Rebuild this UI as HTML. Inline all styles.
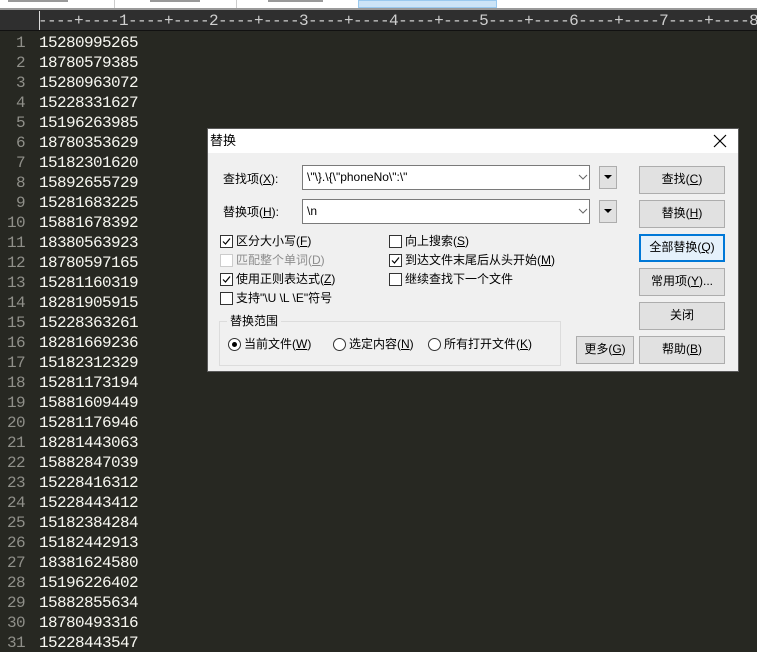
<!DOCTYPE html>
<html><head><meta charset="utf-8"><style>
*{margin:0;padding:0;box-sizing:border-box}
body{width:757px;height:638px;overflow:hidden;background:#272822;position:relative;font-family:"Liberation Sans","Noto Sans CJK SC",sans-serif}
.abs{position:absolute}
.mono{font-family:"Liberation Mono",monospace;font-size:16px;letter-spacing:-0.6px;white-space:pre}
.ln{position:absolute;left:0;width:25px;text-align:right;color:#90908a}
.tx{position:absolute;left:39px;color:#f8f8f2}
.dlg{left:207px;top:128px;width:532px;height:244px;background:#f0f0f0;border:1px solid #5a5a5a}
.t{position:absolute;font-size:12px;color:#000;white-space:nowrap;line-height:14px}
.btn{position:absolute;background:#e1e1e1;border:1px solid #adadad;font-size:12px;text-align:center;line-height:25px;color:#000}
.cb{position:absolute;width:13px;height:13px;border:1px solid #333;background:#fff}
.combo{position:absolute;background:#fff;border:1px solid #7a7a7a;font-size:12px;line-height:23px;padding-left:4px}
.dd{position:absolute;width:18px;height:23px;background:#e1e1e1;border:1px solid #adadad}
.rd{position:absolute;width:13px;height:13px;border:1px solid #333;border-radius:50%;background:#fff}
u{text-decoration:underline}
</style></head><body>
<div class="abs" style="left:0;top:0;width:757px;height:8px;background:#fff"></div>
<div class="abs" style="left:114px;top:0;width:1px;height:8px;background:#ccc"></div>
<div class="abs" style="left:236px;top:0;width:1px;height:8px;background:#ccc"></div>
<div class="abs" style="left:358px;top:0;width:139px;height:8px;background:#cce4f7;border:1px solid #99c9ef"></div>
<div class="abs" style="left:8px;top:0;width:60px;height:2px;background:#999"></div>
<div class="abs" style="left:150px;top:0;width:50px;height:2px;background:#999"></div>
<div class="abs" style="left:268px;top:0;width:55px;height:2px;background:#999"></div>
<div class="abs" style="left:0;top:8px;width:757px;height:2px;background:#9a9a9a"></div>
<div class="abs" style="left:0;top:10px;width:757px;height:20px;background:#2f2f2f"></div>
<div class="abs" style="left:0;top:30px;width:757px;height:1px;background:#111"></div>
<div class="abs" style="left:39px;top:11px;width:1px;height:19px;background:#ddd"></div>
<div class="abs mono" style="left:38px;top:12px;color:#cfcfcf">----+----1----+----2----+----3----+----4----+----5----+----6----+----7----+----8</div>
<div class="mono">
<div class="ln" style="top:34px">1</div><div class="tx" style="top:34px">15280995265</div>
<div class="ln" style="top:54px">2</div><div class="tx" style="top:54px">18780579385</div>
<div class="ln" style="top:74px">3</div><div class="tx" style="top:74px">15280963072</div>
<div class="ln" style="top:94px">4</div><div class="tx" style="top:94px">15228331627</div>
<div class="ln" style="top:114px">5</div><div class="tx" style="top:114px">15196263985</div>
<div class="ln" style="top:134px">6</div><div class="tx" style="top:134px">18780353629</div>
<div class="ln" style="top:154px">7</div><div class="tx" style="top:154px">15182301620</div>
<div class="ln" style="top:174px">8</div><div class="tx" style="top:174px">15892655729</div>
<div class="ln" style="top:194px">9</div><div class="tx" style="top:194px">15281683225</div>
<div class="ln" style="top:214px">10</div><div class="tx" style="top:214px">15881678392</div>
<div class="ln" style="top:234px">11</div><div class="tx" style="top:234px">18380563923</div>
<div class="ln" style="top:254px">12</div><div class="tx" style="top:254px">18780597165</div>
<div class="ln" style="top:274px">13</div><div class="tx" style="top:274px">15281160319</div>
<div class="ln" style="top:294px">14</div><div class="tx" style="top:294px">18281905915</div>
<div class="ln" style="top:314px">15</div><div class="tx" style="top:314px">15228363261</div>
<div class="ln" style="top:334px">16</div><div class="tx" style="top:334px">18281669236</div>
<div class="ln" style="top:354px">17</div><div class="tx" style="top:354px">15182312329</div>
<div class="ln" style="top:374px">18</div><div class="tx" style="top:374px">15281173194</div>
<div class="ln" style="top:394px">19</div><div class="tx" style="top:394px">15881609449</div>
<div class="ln" style="top:414px">20</div><div class="tx" style="top:414px">15281176946</div>
<div class="ln" style="top:434px">21</div><div class="tx" style="top:434px">18281443063</div>
<div class="ln" style="top:454px">22</div><div class="tx" style="top:454px">15882847039</div>
<div class="ln" style="top:474px">23</div><div class="tx" style="top:474px">15228416312</div>
<div class="ln" style="top:494px">24</div><div class="tx" style="top:494px">15228443412</div>
<div class="ln" style="top:514px">25</div><div class="tx" style="top:514px">15182384284</div>
<div class="ln" style="top:534px">26</div><div class="tx" style="top:534px">15182442913</div>
<div class="ln" style="top:554px">27</div><div class="tx" style="top:554px">18381624580</div>
<div class="ln" style="top:574px">28</div><div class="tx" style="top:574px">15196226402</div>
<div class="ln" style="top:594px">29</div><div class="tx" style="top:594px">15882855634</div>
<div class="ln" style="top:614px">30</div><div class="tx" style="top:614px">18780493316</div>
<div class="ln" style="top:634px">31</div><div class="tx" style="top:634px">15228443547</div>
</div>

<div class="abs dlg">
<div class="abs" style="left:0;top:0;width:530px;height:24px;background:#fff"></div>
<div class="t" style="left:2px;top:5px;font-size:13px">替换</div>
<svg class="abs" style="left:505px;top:5px" width="14" height="14"><path d="M1 1L13 13M13 1L1 13" stroke="#000" stroke-width="1.2"/></svg>

<div class="t" style="left:15px;top:43px">查找项(<u>X</u>):</div>
<div class="t" style="left:15px;top:76px">替换项(<u>H</u>):</div>
<div class="combo" style="left:94px;top:36px;width:288px;height:25px">\"\}.\{\"phoneNo\":\"</div>
<div class="combo" style="left:94px;top:70px;width:288px;height:25px">\n</div>
<svg class="abs" style="left:370px;top:45px" width="10" height="6"><path d="M1 1L5 5L9 1" stroke="#666" fill="none"/></svg>
<svg class="abs" style="left:370px;top:79px" width="10" height="6"><path d="M1 1L5 5L9 1" stroke="#666" fill="none"/></svg>
<div class="dd" style="left:391px;top:37px"></div>
<div class="dd" style="left:391px;top:71px"></div>
<svg class="abs" style="left:396px;top:46px" width="8" height="5"><path d="M0 0H8L4 4Z" fill="#000"/></svg>
<svg class="abs" style="left:396px;top:80px" width="8" height="5"><path d="M0 0H8L4 4Z" fill="#000"/></svg>

<div class="btn" style="left:431px;top:37px;width:86px;height:28px">查找(<u>C</u>)</div>
<div class="btn" style="left:431px;top:71px;width:86px;height:28px">替换(<u>H</u>)</div>
<div class="btn" style="left:431px;top:105px;width:86px;height:28px;background:#e5f1fb;border:2px solid #0078d7;line-height:23px">全部替换(<u>Q</u>)</div>
<div class="btn" style="left:431px;top:139px;width:86px;height:28px">常用项(<u>Y</u>)...</div>
<div class="btn" style="left:431px;top:173px;width:86px;height:28px">关闭</div>
<div class="btn" style="left:431px;top:207px;width:86px;height:28px">帮助(<u>B</u>)</div>
<div class="btn" style="left:368px;top:207px;width:58px;height:28px">更多(<u>G</u>)</div>

<div class="cb" style="left:12px;top:106px"></div>
<svg class="abs" style="left:13px;top:107px" width="11" height="11"><path d="M2 5.5L4.5 8L9 2.5" stroke="#000" fill="none" stroke-width="1.2"/></svg>
<div class="t" style="left:28px;top:105px">区分大小写(<u>F</u>)</div>
<div class="cb" style="left:12px;top:125px;border-color:#ccc"></div>
<div class="t" style="left:28px;top:124px;color:#8d8d8d">匹配整个单词(<u>D</u>)</div>
<div class="cb" style="left:12px;top:144px"></div>
<svg class="abs" style="left:13px;top:145px" width="11" height="11"><path d="M2 5.5L4.5 8L9 2.5" stroke="#000" fill="none" stroke-width="1.2"/></svg>
<div class="t" style="left:28px;top:143px">使用正则表达式(<u>Z</u>)</div>
<div class="cb" style="left:12px;top:163px"></div>
<div class="t" style="left:28px;top:162px">支持"\U \L \E"符号</div>

<div class="cb" style="left:181px;top:106px"></div>
<div class="t" style="left:197px;top:105px">向上搜索(<u>S</u>)</div>
<div class="cb" style="left:181px;top:125px"></div>
<svg class="abs" style="left:182px;top:126px" width="11" height="11"><path d="M2 5.5L4.5 8L9 2.5" stroke="#000" fill="none" stroke-width="1.2"/></svg>
<div class="t" style="left:197px;top:124px">到达文件末尾后从头开始(<u>M</u>)</div>
<div class="cb" style="left:181px;top:144px"></div>
<div class="t" style="left:197px;top:143px">继续查找下一个文件</div>

<div class="abs" style="left:11px;top:192px;width:342px;height:45px;border:1px solid #dcdcdc"></div>
<div class="t" style="left:19px;top:185px;background:#f0f0f0;padding:0 3px">替换范围</div>
<div class="rd" style="left:20px;top:209px"></div>
<div class="abs" style="left:24px;top:213px;width:5px;height:5px;border-radius:50%;background:#000"></div>
<div class="t" style="left:36px;top:208px">当前文件(<u>W</u>)</div>
<div class="rd" style="left:125px;top:209px"></div>
<div class="t" style="left:141px;top:208px">选定内容(<u>N</u>)</div>
<div class="rd" style="left:220px;top:209px"></div>
<div class="t" style="left:236px;top:208px">所有打开文件(<u>K</u>)</div>
</div>
</body></html>
